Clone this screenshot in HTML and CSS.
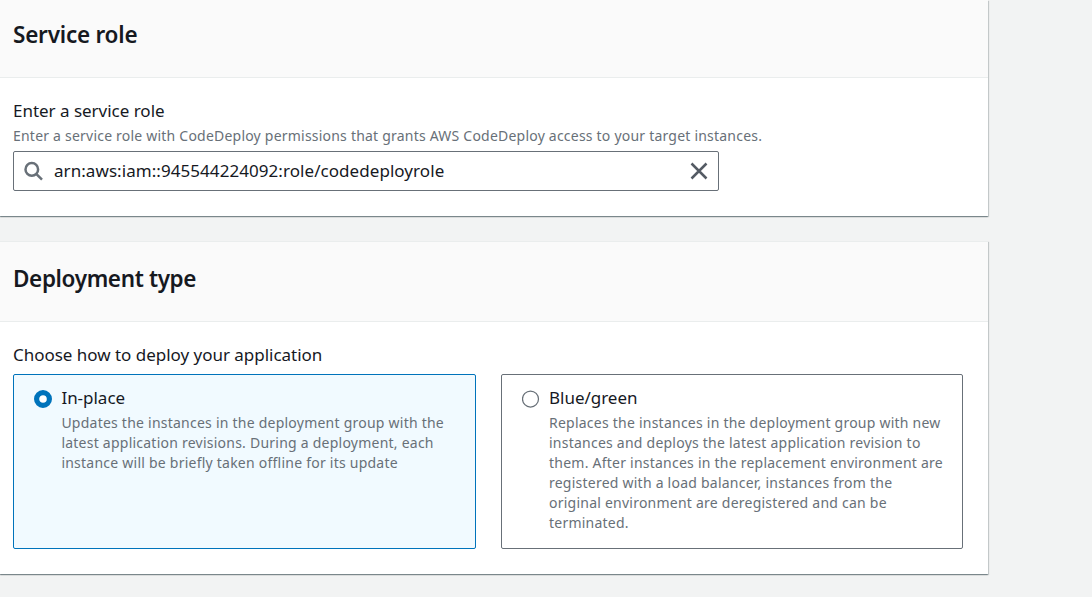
FILE: index.html
```html
<!DOCTYPE html>
<html lang="en">
<head>
<meta charset="utf-8">
<title>Create deployment group</title>
<link rel="stylesheet" href="styles.css">
</head>
<body>
<main class="page">
  <section class="panel panel-role">
    <header class="panel-header header-role"><h2 class="heading">Service role</h2></header>
    <div class="panel-body">
      <label class="label">Enter a service role</label>
      <p class="hint">Enter a service role with CodeDeploy permissions that grants AWS CodeDeploy access to your target instances.</p>
      <div class="search">
        <svg class="search-icon" width="20" height="20" viewBox="0 0 20 20"><circle cx="7.8" cy="8.4" r="6.3"/><path d="M12.2 12.8L18 18.6"/></svg>
        <span class="search-value">arn:aws:iam::945544224092:role/codedeployrole</span>
        <svg class="clear-icon" width="18" height="18" viewBox="0 0 18 18"><path d="M1.5 1.5l15 15M16.5 1.5l-15 15"/></svg>
      </div>
    </div>
  </section>
  <section class="panel panel-type">
    <header class="panel-header"><h2 class="heading heading-type">Deployment type</h2></header>
    <div class="panel-body">
      <div class="label">Choose how to deploy your application</div>
      <div class="tiles">
        <div class="tile selected">
          <svg class="radio" width="18" height="18" viewBox="0 0 18 18"><circle class="radio-on" cx="9" cy="9" r="6.4"/></svg>
          <div class="tile-text">
            <div class="tile-title">In-place</div>
            <p class="tile-desc">Updates the instances in the deployment group with the<br>latest application revisions. During a deployment, each<br>instance will be briefly taken offline for its update</p>
          </div>
        </div>
        <div class="tile tile-bluegreen">
          <svg class="radio" width="18" height="18" viewBox="0 0 18 18"><circle class="radio-off" cx="8.5" cy="9" r="8"/></svg>
          <div class="tile-text">
            <div class="tile-title">Blue/green</div>
            <p class="tile-desc">Replaces the instances in the deployment group with new<br>instances and deploys the latest application revision to<br>them. After instances in the replacement environment are<br>registered with a load balancer, instances from the<br>original environment are deregistered and can be<br>terminated.</p>
          </div>
        </div>
      </div>
    </div>
  </section>
</main>
</body>
</html>
```
FILE: styles.css
```css
* { box-sizing: border-box; }
body { margin: 0; background: #f2f3f3; color: #16191f; font-family: "Noto Sans", sans-serif; overflow: hidden; }
h2, p { margin: 0; }
.page { width: 988px; height: 597px; display: flex; flex-direction: column; gap: 25px; }
.panel { background: #fff; box-shadow: 0 1px 1px 0 rgba(0,28,36,.3), 1px 1px 1px 0 rgba(0,28,36,.15), -1px 1px 1px 0 rgba(0,28,36,.15); }
.panel-role { height: 216px; }
.panel-type { height: 333px; border-top: 1px solid #eaeded; }
.panel-header { height: 80px; padding: 22px 13px 0; background: #fafafa; border-bottom: 1px solid #eaeded; }
.header-role { height: 78px; padding-top: 20px; }
.heading { font-size: 22.5px; line-height: 30px; font-weight: 600; letter-spacing: -.22px; white-space: nowrap; }
.heading-type { letter-spacing: -.37px; }
.panel-body { padding: 20px 25px 0 13px; }
.label { display: block; font-size: 17px; line-height: 25px; letter-spacing: -.02px; white-space: nowrap; }
.hint { font-size: 14px; line-height: 20px; margin-top: 3px; letter-spacing: .215px; color: #687078; white-space: nowrap; }
.search { width: 706px; height: 40px; margin-top: 5px; padding: 0 10px; border: 1px solid #687078; border-radius: 2px; display: flex; align-items: center; }
.search-icon { fill: none; stroke: #687078; stroke-width: 2.5; }
.search-value { margin-left: 10px; padding-bottom: 2px; flex: 1; font-size: 17px; line-height: 25px; letter-spacing: .06px; white-space: nowrap; }
.clear-icon { fill: none; stroke: #545b64; stroke-width: 2.5; }
.tiles { display: grid; grid-template-columns: 463px 462px; gap: 25px; margin-top: 7px; }
.tile { height: 175px; border: 1px solid #687078; border-radius: 2px; padding: 10px 20px; display: flex; gap: 9.4px; }
.tile-bluegreen { gap: 9px; }
.selected { background: #f1faff; border-color: #0073bb; }
.radio { flex: none; margin-top: 5px; }
.radio-on { fill: #fff; stroke: #0073bb; stroke-width: 5.2; }
.radio-off { fill: #fff; stroke: #687078; stroke-width: 1.25; }
.tile-title { font-size: 17px; line-height: 25px; letter-spacing: -.02px; white-space: nowrap; }
.tile-desc { margin-top: 3px; font-size: 14px; line-height: 20px; letter-spacing: .235px; color: #687078; white-space: nowrap; }
```
